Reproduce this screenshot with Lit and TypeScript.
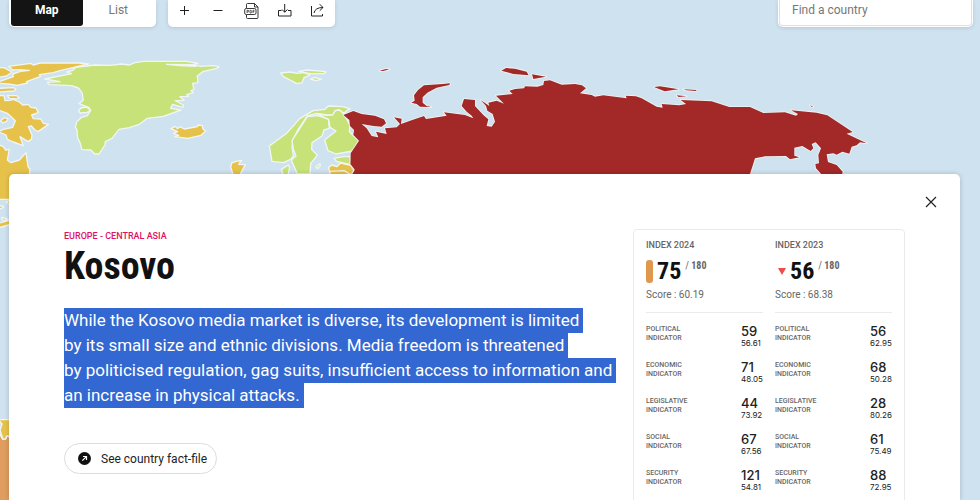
import { LitElement, html, css, svg } from "lit";
import { customElement } from "lit/decorators.js";

interface Indicator { name: string; rank: string; score: string; }
interface YearIndex { year: string; rank: string; score: string; trend: "level" | "down"; rows: Indicator[]; }

const names = ["Political", "Economic", "Legislative", "Social", "Security"];
const rows = (values: [string, string][]): Indicator[] =>
  values.map(([rank, score], i) => ({ name: names[i], rank, score }));

const years: YearIndex[] = [
  { year: "2024", rank: "75", score: "60.19", trend: "level",
    rows: rows([["59", "56.61"], ["71", "48.05"], ["44", "73.92"], ["67", "67.56"], ["121", "54.81"]]) },
  { year: "2023", rank: "56", score: "68.38", trend: "down",
    rows: rows([["56", "62.95"], ["68", "50.28"], ["28", "80.26"], ["61", "75.49"], ["88", "72.95"]]) },
];

const summary = [
  "While the Kosovo media market is diverse, its development is limited",
  "by its small size and ethnic divisions. Media freedom is threatened",
  "by politicised regulation, gag suits, insufficient access to information and",
  "an increase in physical attacks.",
];

@customElement("world-map")
export class WorldMap extends LitElement {
  static styles = css`
    :host { display: block; overflow: hidden; }
    svg { display: block; width: 100%; height: 100%; }
    path { stroke: #f1f6f4; stroke-width: 4; stroke-linejoin: round; }
    .bad path, path.bad { stroke-width: 5; paint-order: stroke; }
    .good { fill: #c6e278; }
    .fair { fill: #e7c24b; }
    .poor { fill: #df9e5f; }
    .bad { fill: #a32929; }
  `;
  render() {
    return html`<svg viewBox="0 0 2940 1500" preserveAspectRatio="xMinYMin slice" aria-hidden="true">
      ${svg`
      <g class="fair" transform="translate(0 150)">
        <path d="M26 49L70 43L92 40L100 45L120 39L235 39L266 42L245 46L222 52L180 62L160 68L118 74L122 79L80 95L82 99L52 106L25 102L-5 100L-5 96L40 80L38 72L62 64L88 61L60 59L38 60Z"/>
        <path d="M-5 53L12 53L36 66L20 78L-5 82Z"/>
        <path d="M-5 115L42 113L47 118L42 123L-5 126Z"/>
        <path d="M22 137L50 137L58 143L48 147L28 145Z"/>
        <path d="M-5 137L12 137L15 152L30 151L40 148L58 156L68 165L85 163L92 172L108 174L115 188L95 195L100 206L122 207L130 220L146 223L114 245L105 240L94 228L85 230L96 255L94 268L84 275L60 260L70 287L40 276L22 268L18 255L-5 245L10 238L38 232L46 212L22 190L-5 180Z"/>
        <path d="M2 212L12 203L24 206L20 214L8 219Z"/>
        <path d="M-5 284L10 290L17 300L28 298L22 330L33 338L58 330L78 308L84 350L90 358L88 375L60 448L-5 448Z"/>
        <path d="M513 236L526 229L532 236L540 230L553 237L592 230L594 225L607 227L609 237L617 243L603 256L563 265L524 260L536 256L520 250L533 245Z"/>
        <path d="M692 352L695 339L706 335L725 331L716 343L736 344L720 374L722 385L695 385L698 370Z"/>
      </g>
      <g class="good" transform="translate(0 150)">
        <path d="M134 87L215 71L200 66L218 61L228 52L285 45L330 46L365 42L388 45L405 38L430 34L560 34L594 40L578 44L602 49L640 47L657 50L650 55L608 65L592 78L594 98L578 100L582 118L573 122L580 128L560 134L566 139L540 140L552 151L526 152L550 165L549 172L518 163L512 175L543 180L490 199L442 205L418 223L388 233L357 238L336 265L316 275L315 285L297 312L285 312L272 300L246 299L240 278L233 264L231 240L226 232L230 216L245 202L262 197L272 182L266 172L237 161L250 150L246 128L235 114L215 107L148 104L142 97L180 95Z"/>
        <path d="M236 181L243 174L258 171L272 180L262 187L240 189Z"/>
      </g>
      <path fill="#f1f6f4" d="M500 193L580 194L588 199L540 197Z"/>
      <g class="good" transform="translate(660 150)">
        <path d="M182 69L212 66L230 70L252 68L270 75L252 83L246 98L230 101L218 94L190 80Z"/>
        <path d="M236 64L262 60L318 65L312 71L270 71Z"/>
        <path d="M272 87L285 82L304 88L288 92Z"/>
        <path d="M148 288L200 250L240 205L280 182L315 178L325 168L368 170L390 176L380 182L372 190L358 180L345 182L340 195L318 194L290 190L262 198L232 242L220 268L216 290L220 318L212 328L190 338L156 334Z"/>
        <path d="M216 272L235 242L262 200L294 197L325 207L328 235L312 240L306 258L276 278L275 298L292 316L272 340L270 372L232 372L214 330L228 318L220 298Z"/>
        <path d="M290 192L318 196L338 195L346 182L358 180L372 192L390 226L388 245L417 272L398 303L348 312L324 302L314 270L348 243L330 232L326 208Z"/>
        <path d="M342 325L370 320L390 320L392 344L350 334Z"/>
        <path d="M184 358L205 345L209 352L203 380L192 380Z"/>
        <path d="M288 350L300 341L301 347L292 356Z"/>
      </g>
      <path class="bad" d="M1030 345L1060 333L1085 342L1125 347L1152 358L1158 370L1145 380L1120 378L1085 372L1100 385L1115 408L1135 412L1128 395L1160 402L1155 385L1190 382L1200 372L1182 352L1205 356L1203 372L1230 362L1272 348L1278 357L1340 347L1332 337L1395 345L1420 355L1415 347L1400 335L1385 318L1392 297L1425 300L1425 318L1450 345L1465 358L1460 378L1475 380L1485 365L1478 342L1462 332L1458 318L1442 300L1468 318L1465 308L1490 302L1512 311L1488 287L1538 282L1528 272L1545 267L1572 265L1575 259L1612 260L1630 255L1632 243L1650 241L1685 254L1725 252L1746 256L1758 265L1740 280L1775 285L1785 290L1810 286L1880 295L1877 287L1908 289L1925 295L1970 320L1988 323L1985 312L2038 316L2058 312L2042 300L2100 302L2135 304L2188 321L2250 321L2290 339L2355 337L2388 347L2394 342L2373 331L2450 338L2482 346L2558 396L2540 401L2600 430L2580 427L2570 436L2555 440L2548 461L2527 455L2510 464L2500 460L2480 463L2484 486L2510 495L2528 515L2520 560L2480 540L2448 505L2446 492L2457 490L2455 465L2463 445L2447 427L2435 432L2440 445L2432 453L2407 438L2383 443L2383 467L2398 472L2370 478L2358 468L2295 469L2265 475L2250 522L2240 560L1050 560L1052 460L1077 422L1060 405L1062 390L1050 378L1048 360Z"/>
      <g class="bad" transform="translate(660 150)">
        <path d="M574 158L584 152L582 136L594 120L612 106L668 102L690 100L688 105L650 113L622 128L608 142L608 158L620 168L634 171L600 170L590 162Z"/>
        <path d="M478 62L498 57L508 58L490 63Z"/>
        <path d="M844 62L858 54L885 56L920 65L926 76L880 72Z"/>
        <path d="M936 73L978 80L940 87Z"/>
        <path d="M1302 111L1320 109L1376 118L1334 124Z"/>
        <path d="M1390 118L1430 120L1428 123L1400 121ZM1370 136L1400 139L1376 141Z"/>
        <path d="M1770 166L1780 170L1774 170Z"/>
      </g>
      <g class="fair" transform="translate(660 150)">
        <path d="M326 352L336 345L350 350L362 339L392 346L402 360L390 380L330 372Z"/>
        <path d="M330 364L372 362L390 372L330 382Z"/>
      </g>
      <g transform="translate(0 480)">
        <path class="fair" d="M-5 138L8 138L10 142L-5 150ZM18 125L40 120L40 133L24 130ZM5 172L22 177L15 182L6 179ZM-5 190L30 180L40 190L-5 204Z"/>
      </g>
      <g transform="translate(0 900)">
        <path class="poor" d="M-5 395L8 418L18 416L20 408L40 412L40 620L-5 620Z"/>
        <path class="fair" d="M-5 359L40 359L40 412L20 408L16 418L8 416L0 390L6 372Z"/>
      </g>`}
    </svg>`;
  }
}

@customElement("index-year")
export class IndexYear extends LitElement {
  static properties = { data: { attribute: false } };
  declare data: YearIndex;
  static styles = css`
    :host { display: block; flex: 1; color: #666; }
    h2 { margin: 0; font: 500 9px/12px Roboto, sans-serif; }
    .rank { display: flex; align-items: center; gap: 4px; height: 23px; margin-top: 9px; }
    .bar { width: 7px; height: 23px; border-radius: 3px; background: #e0984f; }
    .down { margin-left: 3px; border: 4px solid transparent; border-top: 7px solid #ee4b4b; border-bottom: 0; }
    .number { font: 700 24px/23px "Roboto Condensed", Roboto, sans-serif; color: #111; }
    .total { align-self: flex-start; font: 700 10px/12px "Roboto Condensed", Roboto, sans-serif; }
    .slash { font-weight: 400; }
    .score { margin: 5px 0 0; padding-bottom: 10px; border-bottom: 1px solid #eaeaea; font: 10px/14px Roboto, sans-serif; }
    table { width: 100%; margin-top: 11px; border-collapse: collapse; }
    tr { height: 36px; vertical-align: top; }
    th, td { padding: 0; text-align: left; }
    th { padding-top: 1px; font: 500 7px/9px Roboto, sans-serif; text-transform: uppercase; }
    td { width: 22px; color: #222; }
    .place { display: block; font: 500 13px/14px Inter, sans-serif; }
    .points { display: block; font: 8px/10px Inter, sans-serif; }
  `;
  render() {
    const d = this.data;
    return html`
      <h2>INDEX ${d.year}</h2>
      <div class="rank">
        <span class=${d.trend === "down" ? "down" : "bar"}></span>
        <span class="number">${d.rank}</span>
        <span class="total"><span class="slash">/</span> 180</span>
      </div>
      <p class="score">Score : ${d.score}</p>
      <table>
        ${d.rows.map((r) => html`<tr>
          <th scope="row">${r.name}<br />indicator</th>
          <td><span class="place">${r.rank}</span><span class="points">${r.score}</span></td>
        </tr>`)}
      </table>`;
  }
}

@customElement("app-root")
export class AppRoot extends LitElement {
  static styles = css`
    :host { display: block; position: relative; min-height: 100vh; background: #cfe2ef; overflow: hidden; font-family: Roboto, sans-serif; color: #111; }
    * { box-sizing: border-box; }
    button, input { font: inherit; color: inherit; margin: 0; border: 0; background: none; padding: 0; }
    world-map { position: absolute; inset: 0; }
    header { position: relative; display: flex; gap: 12px; padding: 0 7px 0 9px; }
    .box { display: flex; height: 27px; background: #fff; border-radius: 0 0 5px 5px; box-shadow: 0 1px 4px #0000001f; }
    .tabs { width: 147px; padding: 0 2px 1px; }
    .tabs button { flex: 1; padding-bottom: 6px; font-size: 12px; line-height: 20px; color: #777; }
    .tabs .active { background: #141414; color: #fff; font-weight: 700; border-radius: 0 0 3px 3px; }
    .tools { width: 167px; padding-bottom: 6px; }
    .tools button { flex: 1; display: grid; place-items: center; }
    .tools svg { display: block; }
    svg.line { fill: none; stroke: #222; }
    .search { margin-left: auto; width: 195px; padding: 0 1px 1px; }
    .search input { width: 100%; padding: 0 12px 6px; border: 1px solid #e0e0e0; border-top: 0; border-radius: 0 0 4px 4px; font-size: 12px; }
    .search input::placeholder { color: #777; opacity: 1; }
    main { position: relative; display: flex; justify-content: space-between; align-items: flex-start; height: calc(100vh - 174px); min-height: 326px; margin: 147px 20px 0 9px; padding: 55px 55px 0; overflow: hidden; background: #fff; border-radius: 5px 5px 0 0; box-shadow: 0 0 5px #0003; }
    .close { position: absolute; top: 21px; right: 22px; width: 14px; height: 14px; }
    .close svg { display: block; }
    .region { margin: 1px 0 0; font-size: 9px; line-height: 12px; font-weight: 500; color: #e0115f; }
    h1 { margin: 2px 0 0; font: 700 38px/44px "Roboto Condensed", Roboto, sans-serif; }
    .summary { margin: 20px 0 35px; font-size: 17px; line-height: 25px; color: #fff; }
    .summary span { display: block; width: fit-content; padding-right: 4px; background: #3367d1; white-space: nowrap; }
    .fact { display: inline-flex; align-items: center; gap: 10px; height: 31px; padding: 0 9px 0 13px; border: 1px solid #ddd; border-radius: 16px; font-size: 12px; color: #222; text-decoration: none; }
    .card { display: flex; gap: 12px; width: 272px; flex: none; padding: 9px 12px 20px; border: 1px solid #eaeaea; border-radius: 4px; }
  `;
  render() {
    return html`
      <world-map></world-map>
      <header>
        <div class="box tabs"><button class="active">Map</button><button>List</button></div>
        <div class="box tools">
          <button aria-label="Zoom in"><svg class="line" width="16" height="16"><path d="M3 7.500H12M7.500 3V12"/></svg></button>
          <button aria-label="Zoom out"><svg class="line" width="16" height="16"><path d="M3.500 7.500H12.500"/></svg></button>
          <button aria-label="Export as PDF"><svg class="line" width="16" height="18" viewBox="0 0 16 18" stroke-width=".9">
            <path d="M2.500 6V2.500Q2.500 1.500 3.500 1.500H10.500L14 5V15.500Q14 16.500 13 16.500H3.500Q2.500 16.500 2.500 15.500V13M10.500 1.500V5H14"/>
            <rect x=".7" y="6.500" width="11.300" height="6" rx="1.500"/>
            <path stroke-width=".7" d="M3 11V8.300H4Q4.900 8.300 4.900 9.100T4 9.900H3M6 8.300V11H6.500Q7.800 11 7.800 9.700T6.500 8.300ZM9 11V8.300H10.500M9 9.700H10.300"/></svg></button>
          <button aria-label="Download"><svg class="line" width="16" height="16" viewBox="0 0 16 16"><path d="M4.500 7.500H1.500V13H14V7.500H11M7.700 1V9.200M5 6.500L7.700 9.200L10.500 6.500"/></svg></button>
          <button aria-label="Share"><svg class="line" width="16" height="16" viewBox="0 0 16 16"><path d="M1.500 3V13H12.500V11M4 10Q5 4.500 13 4.500M9.700 1.200L13 4.500L9.700 7.800"/></svg></button>
        </div>
        <div class="box search"><input type="text" aria-label="Find a country" placeholder="Find a country" /></div>
      </header>
      <main>
        <button class="close" aria-label="Close"><svg class="line" width="14" height="14"><path stroke-width="1.200" d="M2 2L12 12M12 2L2 12"/></svg></button>
        <article>
          <p class="region">EUROPE - CENTRAL ASIA</p>
          <h1>Kosovo</h1>
          <p class="summary">${summary.map((line) => html`<span>${line}</span>`)}</p>
          <a class="fact" href="#fact-file"><svg width="13" height="13" viewBox="0 0 13 13"><circle cx="6.500" cy="6.500" r="6.500" fill="#111"/><path d="M4.300 8.700L8.400 4.600M5 4.500H8.500V8" fill="none" stroke="#fff" stroke-width="1.200"/></svg>See country fact-file</a>
        </article>
        <section class="card">${years.map((y) => html`<index-year .data=${y}></index-year>`)}</section>
      </main>`;
  }
}
